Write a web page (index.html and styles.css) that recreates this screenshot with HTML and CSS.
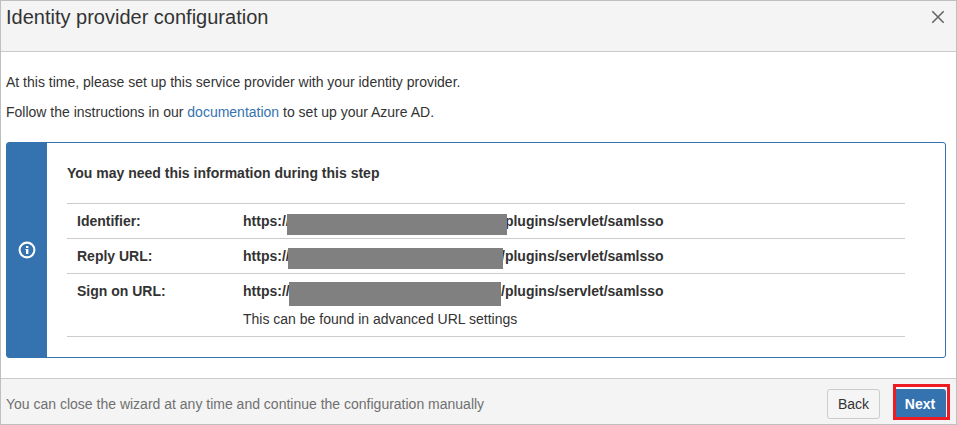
FILE: index.html
```html
<!DOCTYPE html>
<html lang="en">
<head>
<meta charset="utf-8">
<title>Identity provider configuration</title>
<link rel="stylesheet" href="styles.css">
</head>
<body>
<div class="dialog">
  <header class="dialog-header">
    <h2>Identity provider configuration</h2>
    <svg class="close" width="14" height="14" viewBox="0 0 14 14"><path d="M1.3 1.3L12.7 12.7M12.7 1.3L1.3 12.7"/></svg>
  </header>
  <main class="dialog-body">
    <p>At this time, please set up this service provider with your identity provider.</p>
    <p>Follow the instructions in our <a>documentation</a> to set up your Azure AD.</p>
    <section class="info">
      <div class="info-side">
        <svg width="18" height="18" viewBox="0 0 18 18"><circle cx="9" cy="9" r="7.4"/><path d="M8 5h2.4v2H8zM7.4 8h3v5H8V9h-.6z"/></svg>
      </div>
      <div class="info-content">
        <h3>You may need this information during this step</h3>
        <div class="rows">
          <div class="row">
            <div class="label">Identifier:</div>
            <div class="value"><div class="url"><span class="host">https://</span><span>/plugins/servlet/samlsso</span><i class="mask mask-id"></i></div></div>
          </div>
          <div class="row">
            <div class="label">Reply URL:</div>
            <div class="value"><div class="url"><span class="host">https://</span><span>/plugins/servlet/samlsso</span><i class="mask mask-reply"></i></div></div>
          </div>
          <div class="row">
            <div class="label">Sign on URL:</div>
            <div class="value"><div class="url"><span class="host">https://</span><span>/plugins/servlet/samlsso</span><i class="mask mask-sign"></i></div>
              <div class="hint">This can be found in advanced URL settings</div></div>
          </div>
        </div>
      </div>
    </section>
  </main>
  <footer class="dialog-footer">
    <span class="note">You can close the wizard at any time and continue the configuration manually</span>
    <button class="btn">Back</button>
    <div class="highlight"><button class="btn primary">Next</button></div>
  </footer>
</div>
</body>
</html>
```

FILE: styles.css
```css
* { box-sizing: border-box; }
body {
  margin: 0;
  background: #fff;
  color: #333;
  font: 14px/20px "Liberation Sans", Arial, sans-serif;
}
.dialog {
  display: flex;
  flex-direction: column;
  width: 957px;
  height: 425px;
  border: 1px solid #bfbfbf;
  overflow: hidden;
}
.dialog-header {
  display: flex;
  justify-content: space-between;
  height: 51px;
  padding: 0 11px 0 5px;
  background: #f4f4f4;
  border-bottom: 1px solid #ccc;
}
.dialog-header h2 {
  margin: 4px 0 0;
  font-size: 20px;
  line-height: 24px;
  font-weight: 400;
}
.close { margin-top: 9px; fill: none; stroke: #666; stroke-width: 1.6; }
.dialog-body { flex: 1; padding: 20px 10px 0 5px; }
p { margin: 0 0 10px; }
a { color: #3572b0; }
.info {
  display: flex;
  height: 216px;
  margin-top: 20px;
  border: 1px solid #3572b0;
  border-radius: 3px;
}
.info-side {
  display: flex;
  align-items: center;
  justify-content: center;
  width: 40px;
  background: #3572b0;
}
.info-side svg { display: block; fill: #fff; }
.info-side circle { fill: none; stroke: #fff; stroke-width: 2.1; }
.info-content { flex: 1; padding: 20px 40px 0 20px; }
h3 { margin: 0; font-size: 14px; line-height: 20px; }
.rows { margin-top: 20px; border-top: 1px solid #ccc; }
.row {
  display: grid;
  grid-template-columns: 166px 1fr;
  padding: 7px 10px;
  border-bottom: 1px solid #ccc;
}
.label, .url { font-weight: 700; }
.url { position: relative; display: flex; }
.host { width: 258px; }
.hint { margin-top: 8px; }
.mask { position: absolute; height: 21px; background: #808080; }
.mask-id { left: 44px; top: 3px; width: 220px; }
.mask-reply { left: 45px; top: 2px; width: 215px; }
.mask-sign { left: 46px; top: 1px; width: 212px; height: 24px; }
.dialog-footer {
  display: flex;
  align-items: flex-start;
  height: 46px;
  padding: 5px 6px 0 5px;
  background: #f4f4f4;
  border-top: 1px solid #ccc;
}
.note { flex: 1; margin-top: 10px; color: #707070; }
.btn {
  width: 53px;
  height: 30px;
  margin-top: 5px;
  padding: 0;
  border: 1px solid #ccc;
  border-radius: 3px;
  background: #f5f5f5;
  color: #333;
  font: inherit;
}
.highlight {
  width: 57px;
  height: 36px;
  margin-left: 13px;
  padding-top: 2px;
  border: 3px solid #ed1c24;
  background: #f9f9f9;
}
.primary {
  display: block;
  width: 50px;
  height: 28px;
  margin: 0;
  padding-right: 2px;
  border: 0;
  border-radius: 0 3px 0 0;
  background: #3572b0;
  color: #fff;
  font-weight: 700;
  line-height: 30px;
}
```
